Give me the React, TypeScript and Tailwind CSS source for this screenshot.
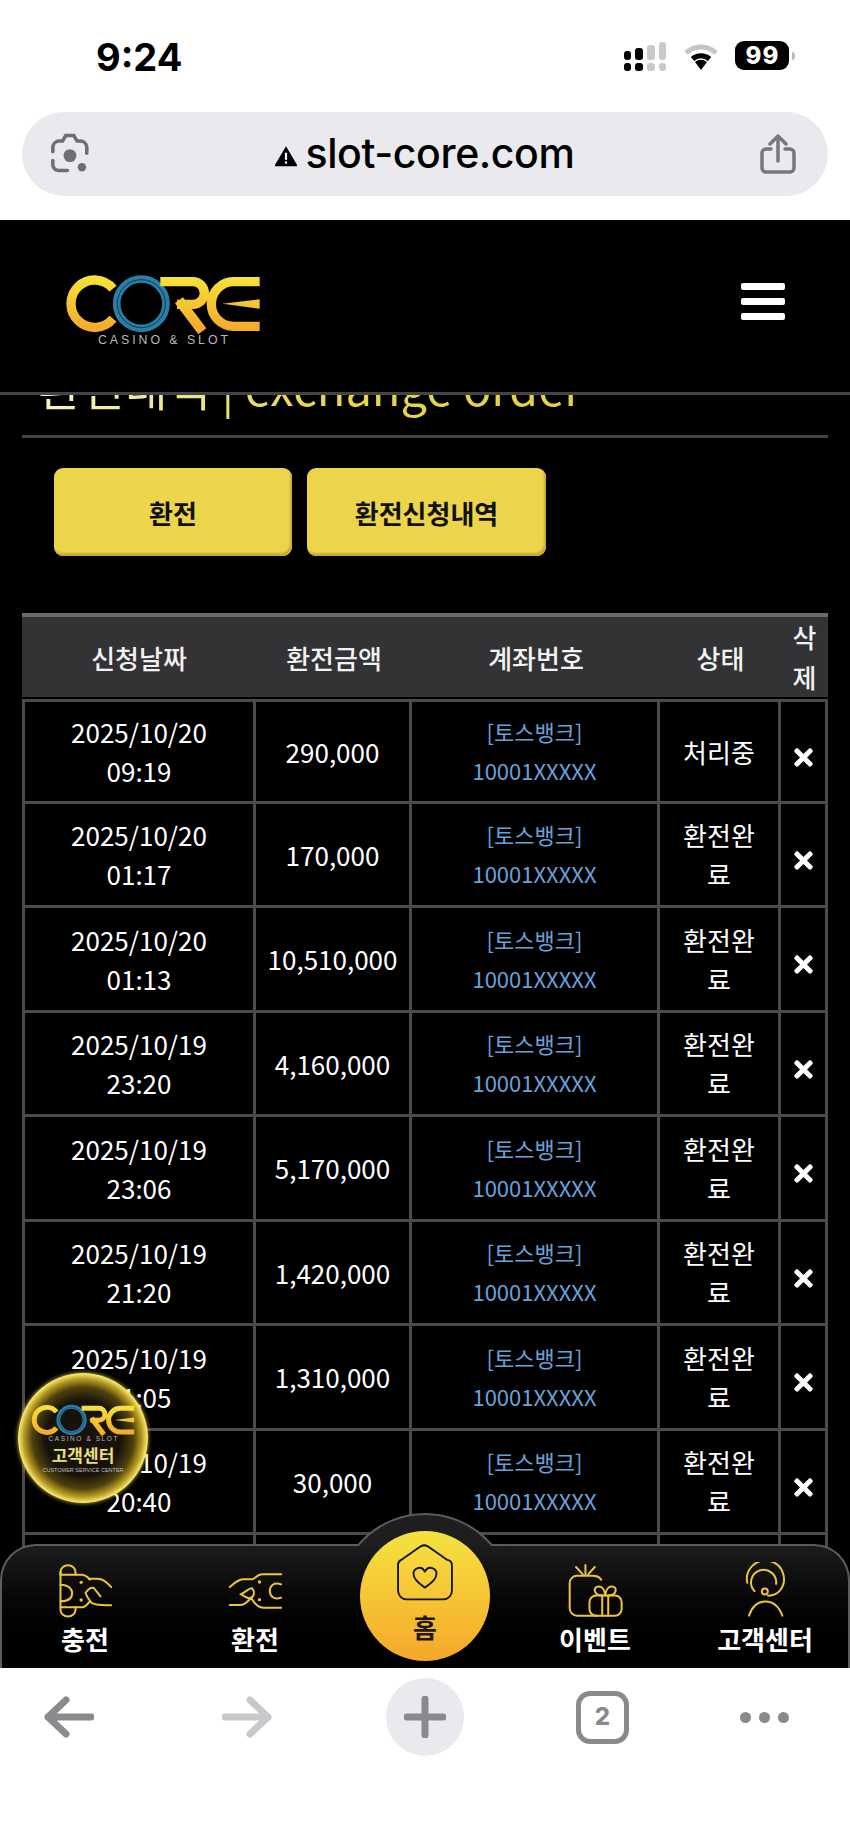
import { FaTimes } from 'react-icons/fa';

const ROWS = [
  { date: '2025/10/20', time: '09:19', amount: '290,000', status: '처리중' },
  { date: '2025/10/20', time: '01:17', amount: '170,000', status: '환전완료' },
  { date: '2025/10/20', time: '01:13', amount: '10,510,000', status: '환전완료' },
  { date: '2025/10/19', time: '23:20', amount: '4,160,000', status: '환전완료' },
  { date: '2025/10/19', time: '23:06', amount: '5,170,000', status: '환전완료' },
  { date: '2025/10/19', time: '21:20', amount: '1,420,000', status: '환전완료' },
  { date: '2025/10/19', time: '21:05', amount: '1,310,000', status: '환전완료' },
  { date: '2025/10/19', time: '20:40', amount: '30,000', status: '환전완료' },
  { date: '2025/10/19', time: '20:12', amount: '30,000', status: '환전완료' },
];

const CELL = 'border-r-[3px] border-b-[3px] border-[#4a4a4c] h-[104.5px] p-0 text-center align-middle first:border-l-[3px]';

// ── Logo ──────────────────────────────────────────────────────────────────────

function Logo({ id, className }: { id: string; className: string }) {
  const stroke = `url(#${id})`;
  return (
    <svg viewBox="100 65 600 225" className={className} fill="none">
      <defs>
        <linearGradient id={id} gradientUnits="userSpaceOnUse" x1="0" y1="75" x2="0" y2="245">
          <stop offset="0" stopColor="#f6e43a" />
          <stop offset="1" stopColor="#f5a72a" />
        </linearGradient>
      </defs>
      <path d="M250 115 A71 71 0 1 0 250 205" stroke={stroke} strokeWidth="28" />
      <circle cx="335" cy="160" r="74" stroke="#2a7ea6" strokeWidth="23" />
      <circle cx="335" cy="160" r="72" stroke="#0b2a38" strokeWidth="2.5" />
      <path d="M392 94 H490 A34 34 0 0 1 490 162 H442" stroke={stroke} strokeWidth="28" />
      <path d="M448 150 L518 243" stroke={stroke} strokeWidth="30" />
      <path d="M690 94 H612 A67 67 0 0 0 612 228 H690" stroke={stroke} strokeWidth="28" />
      <path d="M578 160 L690 147 V175 Z" fill={stroke} />
      <text x="205" y="282" textLength="390" fontSize="37" fill="#b9b9b9" fontFamily="'Liberation Sans', sans-serif">
        CASINO &amp; SLOT
      </text>
    </svg>
  );
}

// ── Status bar + address bar ──────────────────────────────────────────────────

function BrowserTop() {
  return (
    <div className="h-[220px] flex-shrink-0 bg-white flex flex-col">
      <div className="h-[112px] relative flex items-start">
        <span className="ml-[96px] mt-[34px] text-[38px] leading-[46px] font-bold text-black font-['Inter',sans-serif]">9:24</span>
        <svg viewBox="0 0 44 30" className="ml-[442px] mt-[42px] w-[44px] h-[30px]">
          <rect x="0" y="9" width="7" height="9" rx="3" fill="#000" />
          <rect x="11" y="6" width="8" height="12" rx="3" fill="#000" />
          <rect x="23" y="3" width="8" height="15" rx="3" fill="#c9c9c9" />
          <rect x="35" y="0" width="7" height="18" rx="3" fill="#c9c9c9" />
          <rect x="0" y="21" width="7" height="8" rx="3" fill="#000" />
          <rect x="11" y="21" width="8" height="8" rx="3" fill="#000" />
          <rect x="23" y="21" width="8" height="8" rx="3" fill="#c9c9c9" />
          <rect x="35" y="21" width="7" height="8" rx="3" fill="#c9c9c9" />
        </svg>
        <svg viewBox="0 0 36 27" className="ml-[15px] mt-[43px] w-[36px] h-[27px]" fill="none">
          <path d="M3 10 A22 22 0 0 1 33 10" stroke="#c4c4c4" strokeWidth="5" />
          <path d="M9.5 16 A13 13 0 0 1 26.5 16" stroke="#000" strokeWidth="5" />
          <path d="M12 19 L18 27 L24 19 A9 9 0 0 0 12 19 Z" fill="#000" />
        </svg>
        <div className="ml-[16px] mt-[41px] w-[54px] h-[29px] rounded-[9px] bg-black flex items-center justify-center text-white text-[24px] leading-none font-extrabold tracking-[1px] font-['Inter',sans-serif]">
          99
        </div>
        <div className="ml-[3px] mt-[52px] w-[3px] h-[8px] rounded-r-sm bg-[#bdbdbd]" />
      </div>

      <div className="mx-[22px] h-[84px] rounded-[42px] bg-[#e9e9ee] flex items-center relative">
        <svg viewBox="50 38 130 125" className="absolute left-[26px] top-[21px] w-[42px] h-[41px]" fill="none">
          <path d="M65 95 V80 A20 20 0 0 1 85 62 H95 L105 45 H130 L140 62 H150 A20 20 0 0 1 170 80 V100" stroke="#6e6e73" strokeWidth="11" strokeLinecap="round" />
          <path d="M65 122 V135 A18 18 0 0 0 85 153 H110" stroke="#6e6e73" strokeWidth="11" strokeLinecap="round" />
          <circle cx="118" cy="107" r="20" fill="#6e6e73" />
          <circle cx="155" cy="143" r="13" fill="#6e6e73" />
        </svg>
        <div className="flex-1 flex items-center justify-center gap-[8px] -ml-[2px] -mt-[2px]">
          <svg viewBox="0 0 22 20" className="w-[24px] h-[22px] mt-[5px]">
            <path d="M11 1 L21 18 A1 1 0 0 1 20 19.5 H2 A1 1 0 0 1 1 18 Z" fill="#000" />
            <rect x="10" y="7" width="2" height="6.5" fill="#fff" />
            <rect x="10" y="15" width="2" height="2" fill="#fff" />
          </svg>
          <span className="text-[41px] leading-[48px] text-black font-medium tracking-[-0.4px] font-['Inter',sans-serif]">slot-core.com</span>
        </div>
        <svg viewBox="0 0 38 40" className="absolute right-[31px] top-[22px] w-[38px] h-[40px]" fill="none" stroke="#77777c" strokeWidth="3.5" strokeLinecap="round" strokeLinejoin="round">
          <path d="M12 15 H7 A4 4 0 0 0 3 19 V34 A4 4 0 0 0 7 38 H31 A4 4 0 0 0 35 34 V19 A4 4 0 0 0 31 15 H26" />
          <path d="M19 27 V3 M11 10 L19 2 L27 10" />
        </svg>
      </div>
    </div>
  );
}

// ── Exchange table ────────────────────────────────────────────────────────────

function ExchangeTable() {
  return (
    <table className="mx-[22px] mt-[57px] w-[806px] table-fixed border-separate border-spacing-0 text-white text-[26px] leading-[39px]">
      <colgroup>
        <col className="w-[234px]" />
        <col className="w-[156px]" />
        <col className="w-[248px]" />
        <col className="w-[121px]" />
        <col className="w-[47px]" />
      </colgroup>
      <thead>
        <tr className="[&>th]:bg-[#333336] [&>th]:border-t-4 [&>th]:border-t-[#6b6b6e] [&>th]:border-b-2 [&>th]:border-b-black [&>th]:h-[81px] [&>th]:p-0 [&>th]:font-medium [&>th]:text-[#f2f2f2]">
          <th>신청날짜</th>
          <th>환전금액</th>
          <th>계좌번호</th>
          <th>상태</th>
          <th className="leading-[40px]">삭<br />제</th>
        </tr>
      </thead>
      <tbody className="[&>tr:first-child>td]:border-t-[3px]">
        {ROWS.map(row => (
          <tr key={row.date + row.time}>
            <td className={CELL}>{row.date}<br />{row.time}</td>
            <td className={CELL}>{row.amount}</td>
            <td className={`${CELL} text-[#6ba0d8] text-[22px]`}>[토스뱅크]<br />10001XXXXX</td>
            <td className={`${CELL} px-[13px]`}>{row.status}</td>
            <td className={CELL}>
              <FaTimes className="inline-block w-[27px] h-[27px] mt-[3px] text-white" />
            </td>
          </tr>
        ))}
      </tbody>
    </table>
  );
}

// ── Bottom nav icons ──────────────────────────────────────────────────────────

function ChargeIcon() {
  return (
    <svg viewBox="50 35 170 165" className="w-[57px] h-[55px]" fill="none" stroke="#ecc440" strokeWidth="6" strokeLinecap="round" strokeLinejoin="round">
      <path d="M60 70 V62 A22 20 0 0 1 105 62 V70" />
      <path d="M60 62 V175 A22 20 0 0 0 105 175 V168" />
      <path d="M60 70 H125 C138 72 143 78 148 85" />
      <path d="M145 82 H170 C190 82 200 95 212 107" />
      <path d="M60 168 H125 C135 168 142 158 148 150 C156 160 170 162 212 162" />
      <path d="M135 125 C145 110 155 108 160 110 L180 135 M135 125 C140 138 146 146 150 150" />
      <path d="M60 100 C85 100 95 115 95 125 C95 140 85 150 60 150" />
      <circle cx="122" cy="93" r="5" fill="#ecc440" stroke="none" />
      <circle cx="122" cy="146" r="5" fill="#ecc440" stroke="none" />
    </svg>
  );
}

function ExchangeIcon() {
  return (
    <svg viewBox="560 60 170 120" className="w-[57px] h-[40px]" fill="none" stroke="#ecc440" strokeWidth="6" strokeLinecap="round" strokeLinejoin="round">
      <path d="M722 70 H665 C650 70 642 85 635 85 H605 C590 88 580 98 568 108" />
      <path d="M568 162 H600 C610 162 625 150 632 140 C640 155 650 170 670 170 H722" />
      <path d="M600 130 C615 125 625 110 635 112 C645 125 640 135 632 140 C625 145 615 138 605 132" />
      <path d="M722 100 C700 92 688 105 688 120 C688 135 700 148 722 140" />
      <circle cx="657" cy="93" r="5" fill="#ecc440" stroke="none" />
      <circle cx="657" cy="146" r="5" fill="#ecc440" stroke="none" />
    </svg>
  );
}

function EventIcon() {
  return (
    <svg viewBox="425 185 170 170" className="w-[57px] h-[57px]" fill="none" stroke="#ecc440" strokeWidth="6" strokeLinecap="round" strokeLinejoin="round">
      <path d="M527 238 C520 226 510 226 500 226 H455 A22 22 0 0 0 433 248 V323 A22 22 0 0 0 455 345 H515" />
      <path d="M480 194 V222 M452 200 L472 222 M508 200 L488 222" />
      <rect x="492" y="285" width="96" height="60" rx="20" />
      <path d="M530 285 V345 M548 285 V345" />
      <path d="M530 285 C505 285 500 258 520 258 C533 258 538 275 539 285 C540 275 545 258 558 258 C578 258 573 285 548 285" />
    </svg>
  );
}

function SupportIcon() {
  return (
    <svg viewBox="955 185 130 170" className="w-[43px] h-[57px]" fill="none" stroke="#ecc440" strokeWidth="6" strokeLinecap="round" strokeLinejoin="round">
      <path d="M965 247 A56 56 0 1 1 1062 272 C1055 280 1045 285 1028 286" />
      <path d="M987 272 A38 38 0 1 1 1052 250" />
      <circle cx="1018" cy="273" r="9" />
      <path d="M970 346 C980 316 1000 303 1020 303 C1040 303 1060 316 1071 346" />
    </svg>
  );
}

function NavItem({ label, children }: { label: string; children: React.ReactNode }) {
  return (
    <div className="flex flex-col items-center">
      <div className="h-[57px] flex items-center justify-center">{children}</div>
      <span className="mt-[2px] text-[26px] leading-[36px] font-bold text-white">{label}</span>
    </div>
  );
}

function BottomNav() {
  return (
    <nav className="absolute left-0 right-0 bottom-0 h-[124px] rounded-t-[36px] border-t-2 border-x-2 border-[#5c5c5e] bg-gradient-to-b from-[#1c1c1c] to-black">
      {/* Bump behind the home button, clipped so its outline stops at the bar */}
      <div className="absolute left-1/2 -translate-x-1/2 -top-[33px] w-[176px] h-[33px] overflow-hidden">
        <div className="w-[176px] h-[176px] rounded-full border-2 border-[#5c5c5e] bg-[#1e1e1e]" />
      </div>
      <div className="absolute left-1/2 -translate-x-1/2 -top-[15px] w-[130px] h-[130px] rounded-full bg-gradient-to-b from-[#f3e33f] to-[#f5a72a] flex flex-col items-center pt-[12px]">
        <svg viewBox="35 45 195 195" className="w-[60px] h-[60px]" fill="none" stroke="#111" strokeWidth="6" strokeLinejoin="round">
          <path d="M45 118 A18 18 0 0 1 55 100 L115 58 A25 25 0 0 1 145 58 L205 100 A18 18 0 0 1 220 118 V200 A28 28 0 0 1 192 228 H73 A28 28 0 0 1 45 200 Z" />
          <path d="M132 190 C110 175 95 158 95 145 C95 128 120 115 132 138 C145 115 170 128 170 145 C170 158 155 175 132 190 Z" />
        </svg>
        <span className="mt-[6px] text-[26px] leading-[36px] font-bold text-[#1c1a10]">홈</span>
      </div>
      <div className="grid grid-cols-5 -mx-[2px] pt-[16px]">
        <NavItem label="충전"><ChargeIcon /></NavItem>
        <NavItem label="환전"><ExchangeIcon /></NavItem>
        <div />
        <NavItem label="이벤트"><EventIcon /></NavItem>
        <NavItem label="고객센터"><SupportIcon /></NavItem>
      </div>
    </nav>
  );
}

function SupportBadge() {
  return (
    <div className="absolute left-[18px] top-[1153px] w-[130px] h-[130px] rounded-full bg-[radial-gradient(circle_closest-side,#17130a_58%,#4f410d_78%,#b89c24_91%,#f7e86e_99%)] shadow-[0_0_4px_#d8b93a] flex flex-col items-center pt-[30px]">
      <Logo id="badgeLogo" className="w-[106px] h-[40px]" />
      <span className="mt-[2px] text-[17px] leading-[20px] font-bold text-[#ece07a]">고객센터</span>
      <span className="mt-[2px] text-[5.5px] leading-[7px] text-[#bdbdbd] font-['Liberation_Sans',sans-serif]">CUSTOMER SERVICE CENTER</span>
    </div>
  );
}

// ── Browser toolbar ───────────────────────────────────────────────────────────

function BrowserBottom() {
  return (
    <div className="h-[171px] flex-shrink-0 bg-white">
      <div className="flex items-center mt-[10px] h-[78px]">
        <svg viewBox="0 0 50 42" className="ml-[44px] w-[50px] h-[42px]" fill="none" stroke="#8a8a8e" strokeWidth="7" strokeLinecap="round" strokeLinejoin="round">
          <path d="M47 21 H4 M22 4 L4 21 L22 38" />
        </svg>
        <svg viewBox="0 0 50 42" className="ml-[128px] w-[50px] h-[42px]" fill="none" stroke="#c8c8cc" strokeWidth="7" strokeLinecap="round" strokeLinejoin="round">
          <path d="M3 21 H46 M28 4 L46 21 L28 38" />
        </svg>
        <div className="ml-[114px] w-[78px] h-[78px] rounded-full bg-[#e9e9ee] flex items-center justify-center">
          <svg viewBox="0 0 42 42" className="w-[42px] h-[42px]" fill="none" stroke="#8a8a8e" strokeWidth="7" strokeLinecap="round">
            <path d="M21 3 V39 M3 21 H39" />
          </svg>
        </div>
        <div className="ml-[112px] w-[53px] h-[53px] rounded-[14px] border-[5px] border-[#8a8a8e] flex items-center justify-center text-[#8a8a8e] text-[24px] leading-none font-extrabold font-['Inter',sans-serif]">
          2
        </div>
        <div className="ml-[111px] flex gap-[8px]">
          <div className="w-[11px] h-[11px] rounded-full bg-[#8a8a8e]" />
          <div className="w-[11px] h-[11px] rounded-full bg-[#8a8a8e]" />
          <div className="w-[11px] h-[11px] rounded-full bg-[#8a8a8e]" />
        </div>
      </div>
    </div>
  );
}

export default function App() {
  return (
    <div className="w-[850px] h-[1839px] flex flex-col overflow-hidden bg-white font-['Noto_Sans_CJK_KR','Noto_Sans',sans-serif]">
      <BrowserTop />

      <main className="relative h-[1448px] flex-shrink-0 bg-black">
        <div className="absolute inset-0 overflow-hidden">
          {/* Site header */}
          <header className="h-[175px] border-b-[3px] border-[#444446] flex items-start justify-between">
            <Logo id="headerLogo" className="ml-[63px] mt-[52px] w-[200px] h-[75px]" />
            <div className="mr-[65px] mt-[63px] flex flex-col gap-[8px]">
              <div className="w-[44px] h-[7px] rounded-[2px] bg-white" />
              <div className="w-[44px] h-[7px] rounded-[2px] bg-white" />
              <div className="w-[44px] h-[7px] rounded-[2px] bg-white" />
            </div>
          </header>

          {/* Page title, scrolled under the header */}
          <div className="h-[40px] overflow-hidden">
            <h2 className="-mt-[33px] ml-[38px] w-[545px] pb-[14px] text-[47px] leading-[47px] font-normal whitespace-nowrap text-transparent bg-clip-text bg-gradient-to-r from-[#f8f4c0] via-[#e9d64e] to-[#e6d040]">
              환전내역 | exchange order
            </h2>
          </div>
          <div className="mx-[22px] h-[3px] bg-[#444446]" />

          <div className="flex gap-[15px] ml-[54px] mt-[30px]">
            <button className="w-[238px] h-[88px] rounded-[9px] bg-[#ecd54a] shadow-[inset_-2px_-3px_2px_#c4ad38] text-[26px] font-bold text-[#111]">환전</button>
            <button className="w-[239px] h-[88px] rounded-[9px] bg-[#ecd54a] shadow-[inset_-2px_-3px_2px_#c4ad38] text-[26px] font-bold text-[#111]">환전신청내역</button>
          </div>

          <ExchangeTable />
        </div>

        <SupportBadge />
        <BottomNav />
      </main>

      <BrowserBottom />
    </div>
  );
}
